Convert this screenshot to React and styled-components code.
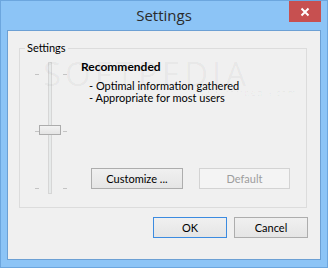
import React from 'react';
import styled, { createGlobalStyle } from 'styled-components';

const Global = createGlobalStyle`
  html, body { margin: 0; padding: 0; background: #fff; }
  body { font-family: "Open Sans", "Noto Sans", sans-serif; }
`;

//** WINDOW **//
const Window = styled.div`
  position: relative;
  width: 328px;
  height: 268px;
  box-sizing: border-box;
  display: flex;
  flex-direction: column;
  background: #8cc4f6;
  border: 1px solid #6ca6de;
`;

const TitleBar = styled.div`
  position: relative;
  height: 29px;
  display: flex;
  align-items: center;
  justify-content: center;
  font-size: 15px;
  color: #2b2b2b;
  padding-bottom: 2px;
  box-sizing: border-box;
`;

const CloseButton = styled.div`
  position: absolute;
  top: 0;
  right: 6px;
  width: 32px;
  height: 21px;
  background: #c75050;
  display: flex;
  align-items: center;
  justify-content: center;
`;

const Panel = styled.div`
  flex: 1;
  margin: 0 6px 7px 6px;
  background: #f0f0f0;
  border: 1px solid #6ca0d4;
  display: flex;
  flex-direction: column;
  font-family: Lato, "Open Sans", sans-serif;
  font-size: 11px;
  color: #000;
`;

//** GROUP BOX **//
const Group = styled.fieldset`
  margin: 11px 13px 0 11px;
  padding: 0;
  height: 166px;
  box-sizing: border-box;
  border: 1px solid #dcdcdc;
  display: grid;
  grid-template-columns: 61px 1fr;
  align-items: start;
  min-width: 0;

  legend {
    margin-left: 5px;
    padding: 0 2px;
    font-size: 11px;
    line-height: 12px;
  }
`;

const Slider = styled.div`
  position: relative;
  margin: 8px 0 0 14px;
  width: 34px;
  height: 132px;
`;

const Track = styled.div`
  position: absolute;
  left: 14px;
  top: 0;
  width: 2px;
  height: 130px;
  background: #e7eaea;
  border: 1px solid #d6d6d6;
`;

const Tick = styled.div`
  position: absolute;
  left: ${p => (p.$right ? 29 : 1)}px;
  top: ${p => p.$top}px;
  width: 4px;
  height: 1px;
  background: #c4c4c4;
`;

const Thumb = styled.div`
  position: absolute;
  left: 5px;
  top: 63px;
  width: 20px;
  height: 8px;
  border: 1px solid #acacac;
  background: linear-gradient(#f2f2f2, #e4e4e4);
`;

const Info = styled.div`
  display: flex;
  flex-direction: column;
  padding-top: 5px;
`;

const Heading = styled.div`
  font-weight: bold;
  font-size: 12px;
  line-height: 15px;
  margin-bottom: 6px;
`;

const Line = styled.div`
  padding-left: 8px;
  line-height: 12px;
`;

const Row = styled.div`
  display: flex;
  gap: 16px;
  margin-top: ${p => p.$top || 0}px;
  padding-left: ${p => p.$indent || 0}px;
  justify-content: ${p => (p.$end ? 'flex-end' : 'flex-start')};
`;

const Button = styled.button`
  width: ${p => p.$w || 74}px;
  height: 21px;
  padding: 0;
  font-family: inherit;
  font-size: 11px;
  color: ${p => (p.disabled ? '#9d9d9d' : '#000')};
  border: 1px solid ${p => (p.disabled ? '#d3d3d3' : p.$default ? '#3c8be0' : '#adadad')};
  background: ${p => (p.disabled ? '#f4f4f4' : 'linear-gradient(#f0f0f0, #e5e5e5)')};
  box-sizing: border-box;
`;

const Footer = styled(Row)`
  gap: 7px;
  margin-top: 9px;
  padding-right: 12px;
`;

const Watermark = styled.div`
  position: absolute;
  left: 42px;
  top: 50px;
  font-family: "Open Sans", sans-serif;
  font-size: 33px;
  letter-spacing: 4px;
  color: rgba(0, 0, 0, 0.045);
  pointer-events: none;

  small {
    display: block;
    font-size: 9px;
    letter-spacing: 1px;
    margin: -10px 0 0 154px;
  }
`;

export default function App() {
  return (
    <>
      <Global />
      <Window>
        <TitleBar>
          Settings
          <CloseButton>
            <svg width="10" height="10" viewBox="0 0 10 10">
              <path d="M1.5 1.5 L8.5 8.5 M8.5 1.5 L1.5 8.5" stroke="#fff" strokeWidth="2" />
            </svg>
          </CloseButton>
        </TitleBar>
        <Panel>
          <Group>
            <legend>Settings</legend>
            <Slider>
              <Track />
              <Tick $top={12} />
              <Tick $top={12} $right />
              <Tick $top={69} />
              <Tick $top={69} $right />
              <Tick $top={126} />
              <Tick $top={126} $right />
              <Thumb />
            </Slider>
            <Info>
              <Heading>Recommended</Heading>
              <Line>- Optimal information gathered</Line>
              <Line>- Appropriate for most users</Line>
              <Row $top={64} $indent={10}>
                <Button $w={92}>Customize ...</Button>
                <Button $w={91} disabled>Default</Button>
              </Row>
            </Info>
          </Group>
          <Footer $end>
            <Button $default>OK</Button>
            <Button>Cancel</Button>
          </Footer>
        </Panel>
        <Watermark>
          SOFTPEDIA
          <small>www.softpedia.com</small>
        </Watermark>
      </Window>
    </>
  );
}
